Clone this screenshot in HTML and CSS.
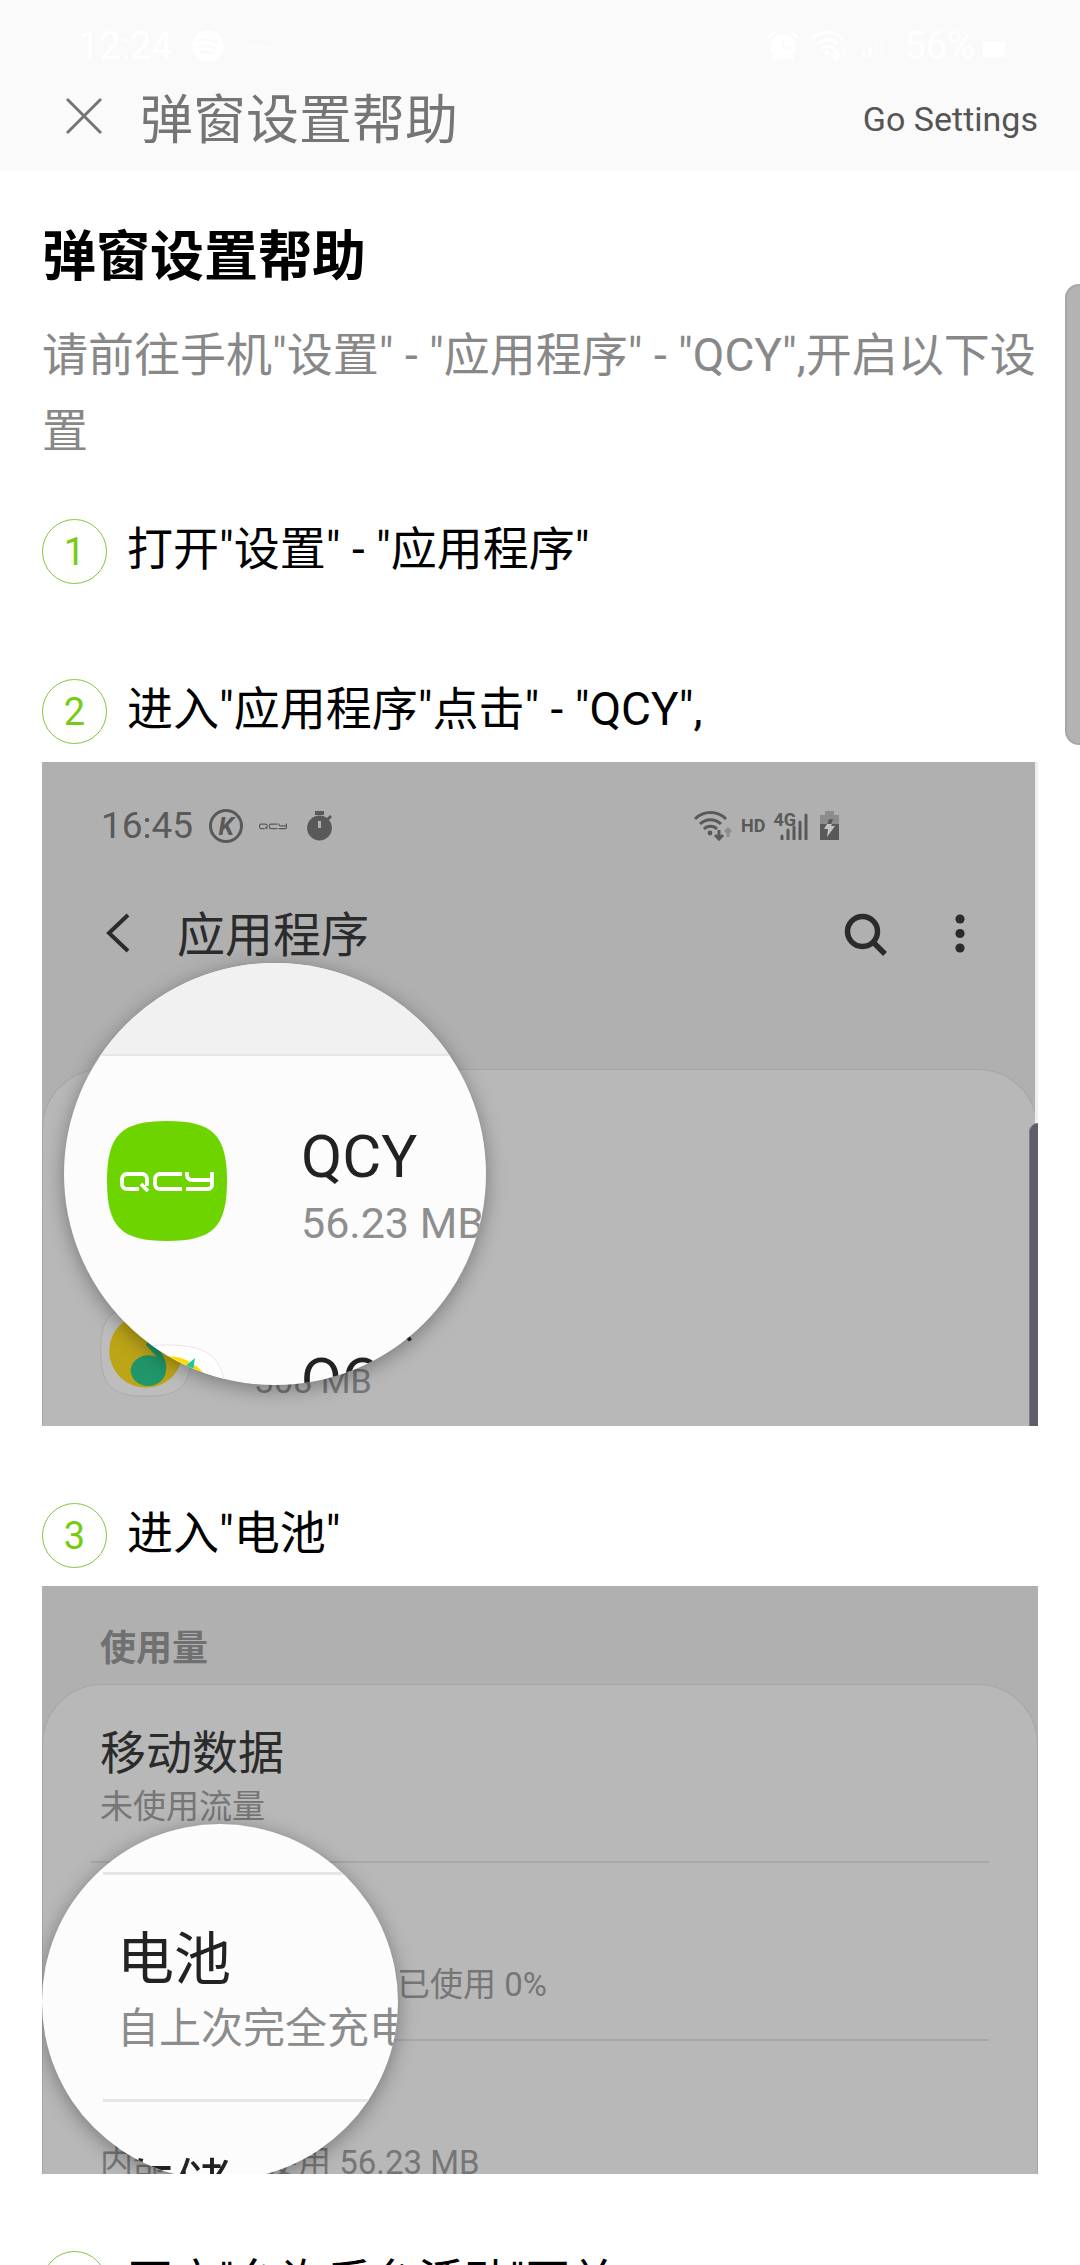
FILE: index.html
```html
<!DOCTYPE html>
<html lang="zh-CN">
<head>
<meta charset="utf-8">
<meta name="viewport" content="width=device-width, initial-scale=1">
<title>弹窗设置帮助</title>
<link rel="stylesheet" href="styles.css">
</head>
<body>
<svg class="defs" aria-hidden="true">
  <symbol id="qcy-logo" viewBox="0 0 94 20">
    <g fill="none" stroke="currentColor" stroke-width="3.8">
      <path d="M19 17H7a5 5 0 0 1-5-5V7a5 5 0 0 1 5-5h15a5 5 0 0 1 5 5v7M21 12l7 7"/>
      <path d="M62 2H40a5 5 0 0 0-5 5v5a5 5 0 0 0 5 5h22"/>
      <path d="M67 0v3a5 5 0 0 0 5 5h20M92 0v13a4 4 0 0 1-4 4H66"/>
    </g>
  </symbol>
  <symbol id="qcy-app" viewBox="0 0 120 120">
    <path fill="#6ed400" d="M60 0c46 0 60 14 60 60s-14 60-60 60S0 106 0 60 14 0 60 0z"/>
    <use href="#qcy-logo" x="13" y="51" width="94" height="20" color="#fff"/>
  </symbol>
  <symbol id="music-app" viewBox="0 0 120 120">
    <path class="music-tile" d="M60 1c45 0 59 14 59 59s-14 59-59 59S1 105 1 60 15 1 60 1z"/>
    <circle class="music-disc" cx="60" cy="60" r="48"/>
    <path class="music-note" d="M86 86a23 20 0 1 1-12-18L60 52l14-26 14-12-4 26-8 16c8 12 12 20 10 30z"/>
  </symbol>
  <symbol id="wifi" viewBox="0 0 39 30">
    <g fill="none" stroke="currentColor" stroke-width="3">
      <path d="M1 8a22 22 0 0 1 31 0M6 13a15 15 0 0 1 21 0M10 18a9 9 0 0 1 13 0"/>
      <path d="M25 19v8M21 24l4 4 4-4"/>
      <path opacity=".4" d="M34 26v-8M31 21l3-3 3 3"/>
    </g>
    <circle cx="16" cy="22" r="2.4" fill="currentColor"/>
  </symbol>
</svg>

<div class="app">
  <header class="header">
    <div class="statusbar">
      <span>12:24</span>
      <svg class="status-disc" viewBox="0 0 34 34" width="34" height="34" aria-hidden="true">
        <circle cx="17" cy="17" r="16" fill="#fff"/>
        <path d="M7 12c7-2 14-1 20 2M8 18c6-2 12-1 17 2M9 23c5-1 9-1 14 2" fill="none" stroke="#fafafa" stroke-width="2.5"/>
      </svg>
      <svg class="status-wave" viewBox="0 0 30 8" width="30" height="8" aria-hidden="true"><path d="M0 3h6l5 3 5-3 3 2h11" fill="none" stroke="#fff" stroke-width="1"/></svg>
      <div class="statusbar-right">
        <svg viewBox="0 0 32 32" width="32" height="32" aria-hidden="true">
          <circle cx="16" cy="17" r="13" fill="#fff"/>
          <path d="M1 8l7-6M31 8l-7-6M5 30l4-4M27 30l-4-4" stroke="#fff" stroke-width="3"/>
          <path d="M16 10v8h6" fill="none" stroke="#fafafa" stroke-width="2"/>
        </svg>
        <svg width="39" height="30" aria-hidden="true"><use href="#wifi"/></svg>
        <svg viewBox="0 0 26 24" width="26" height="24" aria-hidden="true"><path d="M2 24v-5M8 24V13" stroke="#fff" stroke-width="3"/><path d="M14 24V8M20 24V4" stroke="#fff" stroke-width="3" opacity=".4"/></svg>
        <span class="battery-level">56%</span>
        <svg viewBox="0 0 22 24" width="22" height="24" aria-hidden="true"><path d="M0 8h22v15H0z" fill="#fff"/></svg>
      </div>
    </div>
    <div class="titlebar">
      <button class="close" type="button" aria-label="关闭">
        <svg viewBox="0 0 36 48" width="36" height="48"><path d="M1 2l34 34M35 2L1 36" fill="none" stroke="#757575" stroke-width="3"/></svg>
      </button>
      <span class="titlebar-title">弹窗设置帮助</span>
      <a class="titlebar-link" href="#settings">Go Settings</a>
    </div>
  </header>

  <main class="content">
    <h1 class="heading">弹窗设置帮助</h1>
    <p class="intro">请前往手机"设置" - "应用程序" - "QCY",开启以下设置</p>

    <section class="step">
      <h2 class="step-title"><span class="step-number">1</span>打开"设置" - "应用程序"</h2>
    </section>

    <section class="step">
      <h2 class="step-title"><span class="step-number">2</span>进入"应用程序"点击" - "QCY",</h2>
      <figure class="shot shot-apps">
        <div class="phone-status">
          <span class="phone-time">16:45</span>
          <span class="k-badge">K</span>
          <svg class="mini-logo" width="28" height="7" aria-hidden="true"><use href="#qcy-logo"/></svg>
          <svg viewBox="0 0 26 30" width="26" height="30" aria-hidden="true">
            <circle cx="12.5" cy="17" r="12.4" fill="#595959"/>
            <path d="M8 0h9v4H8zM19 8l4-4 2 2-4 4z" fill="#595959"/>
            <path d="M12.5 10v7" stroke="#b0b0b0" stroke-width="3"/>
          </svg>
          <div class="phone-status-right">
            <svg width="39" height="30" aria-hidden="true"><use href="#wifi"/></svg>
            <span class="phone-tag">HD</span>
            <span class="signal">
              <span class="phone-tag signal-type">4G</span>
              <svg viewBox="0 0 28 28" width="28" height="28" aria-hidden="true"><path d="M2 27v-3M8 27v-9M14 27V15M20 27V10M26 27V3" stroke="#595959" stroke-width="3" stroke-linecap="round"/></svg>
            </span>
            <svg viewBox="0 0 19 30" width="19" height="30" aria-hidden="true">
              <path d="M5 0h9v4h5v10H0V4h5z" fill="#8c8c8c"/>
              <path d="M0 13h19v16H0z" fill="#595959"/>
              <path d="M9 8h4l-2 6H7z" fill="#595959"/>
              <path d="M7 13L4 18h4l-1 8 8-11h-4l1-2z" fill="#c4c4c4"/>
            </svg>
          </div>
        </div>
        <div class="phone-toolbar">
          <svg viewBox="0 0 24 48" width="24" height="48" aria-hidden="true"><path d="M22 2L3 20l19 18" fill="none" stroke="#2b2b2b" stroke-width="4"/></svg>
          <span class="phone-title">应用程序</span>
          <svg viewBox="0 0 44 50" width="44" height="50" aria-hidden="true"><g fill="none" stroke="#2b2b2b" stroke-width="5.5"><circle cx="19.5" cy="18.500" r="15"/><path d="M30 29l12 12"/></g></svg>
          <svg class="more" viewBox="0 0 10 48" width="10" height="48" aria-hidden="true"><g fill="#2b2b2b"><circle cx="5" cy="6" r="4.6"/><circle cx="5" cy="20.5" r="4.6"/><circle cx="5" cy="35" r="4.6"/></g></svg>
        </div>
        <div class="sheet app-list">
          <div class="app-row">
            <svg width="92" height="92" aria-hidden="true"><use href="#qcy-app"/></svg>
          </div>
          <div class="app-row">
            <svg class="music-dim" width="92" height="92" aria-hidden="true"><use href="#music-app"/></svg>
            <div><div class="app-name">QQ音乐</div><div class="app-size">308 MB</div></div>
          </div>
        </div>
        <div class="shot-edge"></div>
        <div class="shot-scroll"></div>
        <div class="lens lens-apps">
          <div class="lens-band"></div>
          <div class="lens-app">
            <svg width="120" height="120" aria-hidden="true"><use href="#qcy-app"/></svg>
            <div><div class="lens-name">QCY</div><div class="lens-size">56.23 MB</div></div>
          </div>
          <div class="lens-app">
            <svg class="music-lit" width="120" height="120" aria-hidden="true"><use href="#music-app"/></svg>
            <div class="lens-name">QQ音乐</div>
          </div>
        </div>
      </figure>
    </section>

    <section class="step">
      <h2 class="step-title"><span class="step-number">3</span>进入"电池"</h2>
      <figure class="shot shot-battery">
        <div class="usage-label">使用量</div>
        <div class="sheet">
          <div class="usage-row"><div class="usage-name">移动数据</div><div class="usage-note">未使用流量</div></div>
          <div class="usage-row"><div class="usage-name">电池</div><div class="usage-note">自上次完全充电以来已使用 0%</div></div>
          <div class="usage-row"><div class="usage-name">存储</div><div class="usage-note">内部存储已使用 56.23 MB</div></div>
        </div>
        <div class="lens lens-battery">
          <div class="lens-usage"><div class="lens-title">电池</div><div class="lens-note">自上次完全充电以来</div></div>
          <div class="lens-usage"><div class="lens-title">存储</div></div>
        </div>
      </figure>
    </section>

    <section class="step">
      <h2 class="step-title"><span class="step-number">4</span>开启"允许后台活动"开关</h2>
    </section>
  </main>
  <div class="edge-handle"></div>
</div>
</body>
</html>
```
FILE: styles.css
```css
* {
  box-sizing: border-box;
}

body {
  margin: 0;
  background: #fff;
  color: #000;
  font-family: Roboto, "Noto Sans CJK SC", sans-serif;
}

svg {
  display: block;
  flex: none;
}

.defs {
  position: absolute;
  width: 0;
  height: 0;
}

.app {
  position: relative;
  display: flex;
  flex-direction: column;
  height: 100vh;
  overflow: hidden;
}

/* Header */
.header {
  flex: none;
  padding-bottom: 3px;
  background: #fafafa;
}

.statusbar {
  display: flex;
  align-items: center;
  height: 74px;
  padding: 18px 75px 0 78px;
  color: #fff;
  font-size: 38px;
}

.status-disc {
  margin-left: 18px;
}

.status-wave {
  margin-left: 18px;
}

.statusbar-right {
  display: flex;
  align-items: center;
  gap: 12px;
  margin-left: auto;
}

.battery-level {
  margin: 0 -4px 0 4px;
}

.titlebar {
  display: flex;
  align-items: center;
  height: 94px;
  padding: 0 42px 0 66px;
}

.close {
  padding: 0;
  border: 0;
  background: none;
}

.titlebar-title {
  margin-left: 38px;
  color: #757575;
  font-size: 53px;
  line-height: 72px;
}

.titlebar-link {
  margin-left: auto;
  padding-bottom: 4px;
  color: #555;
  font-size: 34px;
  text-decoration: none;
}

/* Help text */
.content {
  flex: 1;
  min-height: 0;
  padding: 51px 42px 0;
  overflow-y: auto;
  scrollbar-width: none;
}

.heading {
  margin: 0;
  font-size: 54px;
  font-weight: 700;
  line-height: 72px;
}

.intro {
  margin: 23px 0 50px;
  color: #888;
  font-size: 46px;
  line-height: 76px;
}

.step {
  padding-bottom: 77px;
}

.step-title {
  display: flex;
  align-items: flex-start;
  gap: 20px;
  margin: 0 0 18px;
  font-size: 46px;
  font-weight: 400;
  line-height: 61px;
}

.step-number {
  flex: none;
  width: 65px;
  height: 65px;
  border: 1px solid #86c440;
  border-radius: 50%;
  color: #76cc12;
  font-size: 38px;
  line-height: 65px;
  text-align: center;
}

/* Dimmed phone screens */
.shot {
  position: relative;
  margin: 0;
  overflow: hidden;
  background: #b0b0b0;
  white-space: nowrap;
}

.shot-apps {
  height: 664px;
}

.shot-battery {
  height: 588px;
}

.phone-status {
  display: flex;
  align-items: center;
  height: 84px;
  padding: 44px 199px 0 59px;
  color: #595959;
}

.phone-time {
  font-size: 37px;
  line-height: 40px;
}

.k-badge {
  width: 34px;
  height: 34px;
  margin-left: 16px;
  border: 3px solid #595959;
  border-radius: 50%;
  font-size: 25px;
  font-style: italic;
  font-weight: 700;
  line-height: 29px;
  text-align: center;
}

.mini-logo {
  margin: 0 20px 0 16px;
}

.phone-status-right {
  display: flex;
  align-items: center;
  margin-left: auto;
}

.phone-tag {
  margin: 0 8px;
  font-size: 18px;
  font-weight: 700;
  line-height: 20px;
}

.signal {
  display: flex;
  align-items: flex-end;
  margin-right: 12px;
}

.signal-type {
  align-self: flex-start;
  margin: -2px -16px 0 0;
}

.phone-toolbar {
  display: flex;
  align-items: flex-start;
  height: 182px;
  padding: 67px 73px 0 64px;
}

.phone-title {
  flex: 1;
  margin-left: 47px;
  color: #2b2b2b;
  font-size: 48px;
  line-height: 45px;
}

.more {
  margin-left: 68px;
}

.sheet {
  border: 1px solid #a6a6a6;
  border-bottom: 0;
  border-radius: 60px 60px 0 0;
  background: #b8b8b8;
}

.app-list {
  height: 400px;
  margin-top: 41px;
  padding: 17px 0 0 57px;
}

.app-row {
  display: flex;
  align-items: center;
  gap: 63px;
  height: 176px;
}

.app-name {
  color: #2b2b2b;
  font-size: 47px;
  line-height: 60px;
}

.app-size {
  color: #757575;
  font-size: 34px;
  line-height: 54px;
}

.music-tile {
  fill: var(--tile);
  stroke: var(--tile-edge);
}

.music-disc {
  fill: var(--disc);
}

.music-note {
  fill: var(--note);
}

.music-dim {
  --tile: #bdbdbd;
  --tile-edge: #a9a4a9;
  --disc: #bda518;
  --note: #21966a;
}

.music-lit {
  --tile: #fff;
  --tile-edge: #eee0e8;
  --disc: #ffdc00;
  --note: #12c9a8;
}

.shot-edge {
  position: absolute;
  top: 0;
  right: 0;
  width: 3px;
  height: 364px;
  background: #efefef;
}

.shot-scroll {
  position: absolute;
  top: 361px;
  right: 0;
  bottom: 0;
  width: 9px;
  border-left: 1px solid #7c7b84;
  border-radius: 9px 0 0 0;
  background: #5f5d6b;
}

.usage-label {
  padding: 38px 58px 10px;
  color: #707070;
  font-size: 36px;
  font-weight: 700;
  line-height: 50px;
}

.usage-row {
  margin: 0 48px;
  padding: 37px 9px 31px;
  border-bottom: 2px solid #a8a8a8;
}

.usage-name {
  color: #2b2b2b;
  font-size: 46px;
  line-height: 62px;
}

.usage-note {
  color: #767676;
  font-size: 33px;
  line-height: 46px;
}

/* Magnifying lens over a screen */
.lens {
  position: absolute;
  overflow: hidden;
  border-radius: 50%;
  background: #fcfcfc;
  box-shadow: 0 4px 20px rgba(0, 0, 0, 0.35);
}

.lens-apps {
  top: 201px;
  left: 22px;
  width: 422px;
  height: 422px;
}

.lens-band {
  height: 93px;
  border-bottom: 2px solid #e6e6e6;
  background: #f1f1f1;
}

.lens-app {
  display: flex;
  align-items: flex-start;
  gap: 74px;
  padding: 65px 0 26px 43px;
}

.lens-name {
  color: #222;
  font-size: 60px;
  line-height: 72px;
}

.lens-size {
  color: #8e8e8e;
  font-size: 43px;
  line-height: 60px;
}

.lens-battery {
  top: 238px;
  left: 0;
  width: 356px;
  height: 356px;
  padding-top: 48px;
}

.lens-usage {
  margin-left: 61px;
  padding: 47px 0 39px 14px;
  border-top: 3px solid #e6e6e6;
}

.lens-title {
  color: #222;
  font-size: 57px;
  line-height: 76px;
}

.lens-note {
  color: #8c8c8c;
  font-size: 42px;
  line-height: 62px;
}

/* Edge panel handle floating over the page */
.edge-handle {
  position: absolute;
  top: 284px;
  right: 0;
  width: 15px;
  height: 461px;
  border: 2px solid #a6a6a6;
  border-right: 0;
  border-radius: 14px 0 0 14px;
  background: #b3b3b3;
}
```
